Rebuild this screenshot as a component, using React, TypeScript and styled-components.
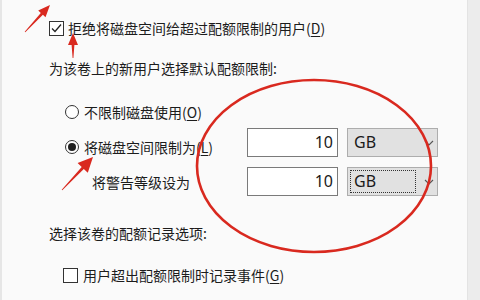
import React from "react";
import styled, { createGlobalStyle } from "styled-components";

const GlobalStyle = createGlobalStyle`
  html, body {
    margin: 0;
    padding: 0;
  }
  body {
    background: #fafafa;
    font-family: "Noto Sans CJK SC", "Noto Sans", sans-serif;
    color: #1c1c1c;
  }
`;

const RED = "#d9291f";

// arrow outline from tail (x1,y1) to tip (x2,y2)
const arrowPoints = (x1: number, y1: number, x2: number, y2: number, head = 13, hw = 6) => {
  const dx = x2 - x1;
  const dy = y2 - y1;
  const len = Math.hypot(dx, dy);
  const ux = dx / len;
  const uy = dy / len;
  const px = -uy;
  const py = ux;
  const bx = x2 - ux * head;
  const by = y2 - uy * head;
  const sw = 1.4;
  const tw = 0.4;
  const pts = [
    [x1 + px * tw, y1 + py * tw],
    [bx + px * sw, by + py * sw],
    [bx + px * hw, by + py * hw],
    [x2, y2],
    [bx - px * hw, by - py * hw],
    [bx - px * sw, by - py * sw],
    [x1 - px * tw, y1 - py * tw],
  ];
  return pts.map((p) => p.map((v) => v.toFixed(1)).join(",")).join(" ");
};

const App = () => {
  return (
    <Page>
      <GlobalStyle />
      <Edge />
      <Body>
        <Row>
          <Box>
            <svg width="15" height="15" viewBox="0 0 15 15">
              <polyline points="3,7.5 6,10.5 12,3.5" fill="none" stroke="#222" strokeWidth="1.3" />
            </svg>
          </Box>
          <span>
            拒绝将磁盘空间给超过配额限制的用户(<U>D</U>)
          </span>
        </Row>

        <Row $top={20}>为该卷上的新用户选择默认配额限制:</Row>

        <Row $top={24} $indent={16} $gap={5}>
          <Radio />
          <span>
            不限制磁盘使用(<U>O</U>)
          </span>
        </Row>

        <QuotaGrid>
          <RadioLabel>
            <Radio $checked />
            <span>
              将磁盘空间限制为(<U>L</U>)
            </span>
          </RadioLabel>
          <Field>10</Field>
          <Select>
            <SelectText>GB</SelectText>
            <Chevron />
          </Select>

          <WarnLabel>将警告等级设为</WarnLabel>
          <Field>10</Field>
          <Select>
            <SelectText $focused>GB</SelectText>
            <Chevron />
          </Select>
        </QuotaGrid>

        <Row $top={27}>选择该卷的配额记录选项:</Row>

        <Row $top={22} $indent={14} $gap={5}>
          <Box />
          <span>
            用户超出配额限制时记录事件(<U>G</U>)
          </span>
        </Row>
      </Body>
      <Scrollbar />

      <Marks width="480" height="300" viewBox="0 0 480 300">
        <ellipse cx="314" cy="166" rx="117" ry="86" fill="none" stroke={RED} strokeWidth="2.6" />
        <polygon points={arrowPoints(25, 32, 50, 5, 12, 5)} fill={RED} />
        <polygon points={arrowPoints(73, 58, 73, 33, 12, 5)} fill={RED} />
        <polygon points={arrowPoints(62, 190, 93, 157, 15, 7)} fill={RED} />
      </Marks>
    </Page>
  );
};

const Chevron = () => (
  <svg width="10" height="6" viewBox="0 0 10 6">
    <polyline points="1,1 5,5 9,1" fill="none" stroke="#555" strokeWidth="1.1" />
  </svg>
);

const Page = styled.div`
  position: relative;
  display: flex;
  width: 480px;
  height: 300px;
  overflow: hidden;
  background: #fafafa;
`;

const Edge = styled.div`
  width: 2px;
  background: #e6e6e6;
`;

const Body = styled.div`
  flex: 1;
  display: flex;
  flex-direction: column;
  padding: 18px 0 0 47px;
  font-size: 14px;
`;

const Scrollbar = styled.div`
  width: 12px;
  background: #ececec;
  border-left: 1px solid #e3e3e3;
`;

const Row = styled.div<{ $top?: number; $indent?: number; $gap?: number }>`
  display: flex;
  align-items: center;
  height: 20px;
  line-height: 20px;
  margin-top: ${(p) => p.$top ?? 0}px;
  margin-left: ${(p) => p.$indent ?? 0}px;
  gap: ${(p) => p.$gap ?? 4}px;
  white-space: nowrap;
`;

const U = styled.span`
  text-decoration: underline;
  text-underline-offset: 2px;
`;

const Box = styled.div`
  width: 13px;
  height: 13px;
  border: 1px solid #333;
  background: #fff;
  flex-shrink: 0;
  svg {
    display: block;
    margin: -1px;
  }
`;

const Radio = styled.div<{ $checked?: boolean }>`
  position: relative;
  width: 12px;
  height: 12px;
  border: 1px solid #333;
  border-radius: 50%;
  background: #fff;
  flex-shrink: 0;
  &::after {
    content: "";
    display: ${(p) => (p.$checked ? "block" : "none")};
    position: absolute;
    left: 2px;
    top: 2px;
    width: 8px;
    height: 8px;
    border-radius: 50%;
    background: #1f1f1f;
  }
`;

const QuotaGrid = styled.div`
  display: grid;
  grid-template-columns: 173px 91px 91px;
  grid-auto-rows: 29px;
  column-gap: 9px;
  row-gap: 10px;
  margin: 6px 0 0 16px;
  align-items: center;
`;

const RadioLabel = styled.div`
  display: flex;
  align-items: center;
  gap: 5px;
  margin-top: 9px;
  line-height: 20px;
  white-space: nowrap;
`;

const WarnLabel = styled.div`
  padding-left: 27px;
  line-height: 20px;
  white-space: nowrap;
`;

const Field = styled.div`
  box-sizing: border-box;
  height: 29px;
  border: 1px solid #7a7a7a;
  background: #fff;
  font-family: "Noto Sans", "Open Sans", sans-serif;
  font-size: 16px;
  line-height: 27px;
  text-align: right;
  padding-right: 4px;
  color: #1a1a1a;
`;

const Select = styled.div`
  box-sizing: border-box;
  height: 29px;
  display: flex;
  align-items: center;
  justify-content: space-between;
  padding: 0 3px 0 2px;
  border: 1px solid #adadad;
  background: #e1e1e1;
`;

const SelectText = styled.span<{ $focused?: boolean }>`
  box-sizing: border-box;
  width: 66px;
  height: 23px;
  padding-left: 3px;
  border: 1px dotted ${(p) => (p.$focused ? "#333" : "transparent")};
  font-family: "Noto Sans", "Open Sans", sans-serif;
  font-size: 16px;
  line-height: 21px;
  color: #1a1a1a;
`;

const Marks = styled.svg`
  position: absolute;
  left: 0;
  top: 0;
  pointer-events: none;
`;

export default App;
